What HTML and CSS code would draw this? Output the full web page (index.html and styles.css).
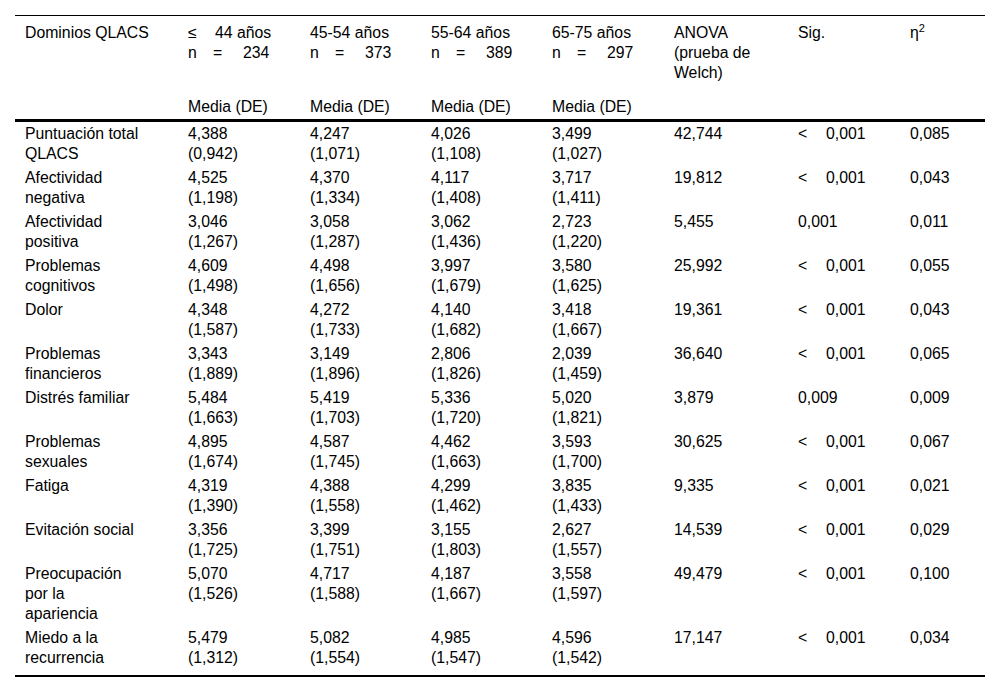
FILE: index.html
```html
<!DOCTYPE html>
<html lang="es">
<head>
<meta charset="utf-8">
<title>Dominios QLACS</title>
<link rel="stylesheet" href="styles.css">
</head>
<body>
<table class="tbl">
  <colgroup>
    <col class="c0"><col class="c1"><col class="c2"><col class="c3"><col class="c4"><col class="c5"><col class="c6"><col class="c7">
  </colgroup>
  <thead>
    <tr class="h1">
      <th>Dominios QLACS</th>
      <th><span class="le">≤</span>44 años<br><span class="n">n</span><span class="eq">=</span>234</th>
      <th>45-54 años<br><span class="n">n</span><span class="eq">=</span>373</th>
      <th>55-64 años<br><span class="n">n</span><span class="eq">=</span>389</th>
      <th>65-75 años<br><span class="n">n</span><span class="eq">=</span>297</th>
      <th>ANOVA<br>(prueba de<br>Welch)</th>
      <th>Sig.</th>
      <th>η<sup>2</sup></th>
    </tr>
    <tr class="h2">
      <th></th>
      <th>Media (DE)</th>
      <th>Media (DE)</th>
      <th>Media (DE)</th>
      <th>Media (DE)</th>
      <th></th>
      <th></th>
      <th></th>
    </tr>
  </thead>
  <tbody>
    <tr><td>Puntuación total<br>QLACS</td><td>4,388<br>(0,942)</td><td>4,247<br>(1,071)</td><td>4,026<br>(1,108)</td><td>3,499<br>(1,027)</td><td>42,744</td><td><span class="lt">&lt;</span>0,001</td><td>0,085</td></tr>
    <tr><td>Afectividad<br>negativa</td><td>4,525<br>(1,198)</td><td>4,370<br>(1,334)</td><td>4,117<br>(1,408)</td><td>3,717<br>(1,411)</td><td>19,812</td><td><span class="lt">&lt;</span>0,001</td><td>0,043</td></tr>
    <tr><td>Afectividad<br>positiva</td><td>3,046<br>(1,267)</td><td>3,058<br>(1,287)</td><td>3,062<br>(1,436)</td><td>2,723<br>(1,220)</td><td>5,455</td><td>0,001</td><td>0,011</td></tr>
    <tr><td>Problemas<br>cognitivos</td><td>4,609<br>(1,498)</td><td>4,498<br>(1,656)</td><td>3,997<br>(1,679)</td><td>3,580<br>(1,625)</td><td>25,992</td><td><span class="lt">&lt;</span>0,001</td><td>0,055</td></tr>
    <tr><td>Dolor</td><td>4,348<br>(1,587)</td><td>4,272<br>(1,733)</td><td>4,140<br>(1,682)</td><td>3,418<br>(1,667)</td><td>19,361</td><td><span class="lt">&lt;</span>0,001</td><td>0,043</td></tr>
    <tr><td>Problemas<br>financieros</td><td>3,343<br>(1,889)</td><td>3,149<br>(1,896)</td><td>2,806<br>(1,826)</td><td>2,039<br>(1,459)</td><td>36,640</td><td><span class="lt">&lt;</span>0,001</td><td>0,065</td></tr>
    <tr><td>Distrés familiar</td><td>5,484<br>(1,663)</td><td>5,419<br>(1,703)</td><td>5,336<br>(1,720)</td><td>5,020<br>(1,821)</td><td>3,879</td><td>0,009</td><td>0,009</td></tr>
    <tr><td>Problemas<br>sexuales</td><td>4,895<br>(1,674)</td><td>4,587<br>(1,745)</td><td>4,462<br>(1,663)</td><td>3,593<br>(1,700)</td><td>30,625</td><td><span class="lt">&lt;</span>0,001</td><td>0,067</td></tr>
    <tr><td>Fatiga</td><td>4,319<br>(1,390)</td><td>4,388<br>(1,558)</td><td>4,299<br>(1,462)</td><td>3,835<br>(1,433)</td><td>9,335</td><td><span class="lt">&lt;</span>0,001</td><td>0,021</td></tr>
    <tr><td>Evitación social</td><td>3,356<br>(1,725)</td><td>3,399<br>(1,751)</td><td>3,155<br>(1,803)</td><td>2,627<br>(1,557)</td><td>14,539</td><td><span class="lt">&lt;</span>0,001</td><td>0,029</td></tr>
    <tr><td>Preocupación<br>por la<br>apariencia</td><td>5,070<br>(1,526)</td><td>4,717<br>(1,588)</td><td>4,187<br>(1,667)</td><td>3,558<br>(1,597)</td><td>49,479</td><td><span class="lt">&lt;</span>0,001</td><td>0,100</td></tr>
    <tr class="last"><td>Miedo a la<br>recurrencia</td><td>5,479<br>(1,312)</td><td>5,082<br>(1,554)</td><td>4,985<br>(1,547)</td><td>4,596<br>(1,542)</td><td>17,147</td><td><span class="lt">&lt;</span>0,001</td><td>0,034</td></tr>
  </tbody>
</table>
</body>
</html>
```

FILE: styles.css
```css
html, body {
  margin: 0;
  padding: 0;
  background: #fff;
}

body {
  padding: 15px 15px 0 15px;
  font-family: "Liberation Sans", Arial, sans-serif;
  font-size: 15.8px;
  line-height: 20px;
  color: #000;
}

.tbl {
  width: 970px;
  border-collapse: collapse;
  table-layout: fixed;
  border-top: 1px solid #000;
  border-bottom: 2px solid #000;
}

.c0 { width: 163px; }
.c1 { width: 122px; }
.c2 { width: 121px; }
.c3 { width: 121px; }
.c4 { width: 122px; }
.c5 { width: 124px; }
.c6 { width: 112px; }
.c7 { width: 85px; }

.tbl th,
.tbl td {
  text-align: left;
  vertical-align: top;
  font-weight: normal;
  padding: 3px 10px 1px 10px;
  white-space: nowrap;
}

.h1 th {
  padding-top: 7px;
  padding-bottom: 6px;
}

.h2 th {
  padding-top: 8px;
  padding-bottom: 2px;
  border-bottom: 3px solid #000;
}

.tbl tbody tr:first-child td {
  padding-top: 2px;
}

.tbl tr.last td {
  padding-bottom: 7px;
}

.le {
  display: inline-block;
  width: 27px;
}

.n {
  display: inline-block;
  width: 25px;
}

.eq {
  display: inline-block;
  width: 30px;
}

.lt {
  display: inline-block;
  width: 28px;
}

sup {
  font-size: 11px;
  line-height: 0;
  vertical-align: 6px;
}
```
